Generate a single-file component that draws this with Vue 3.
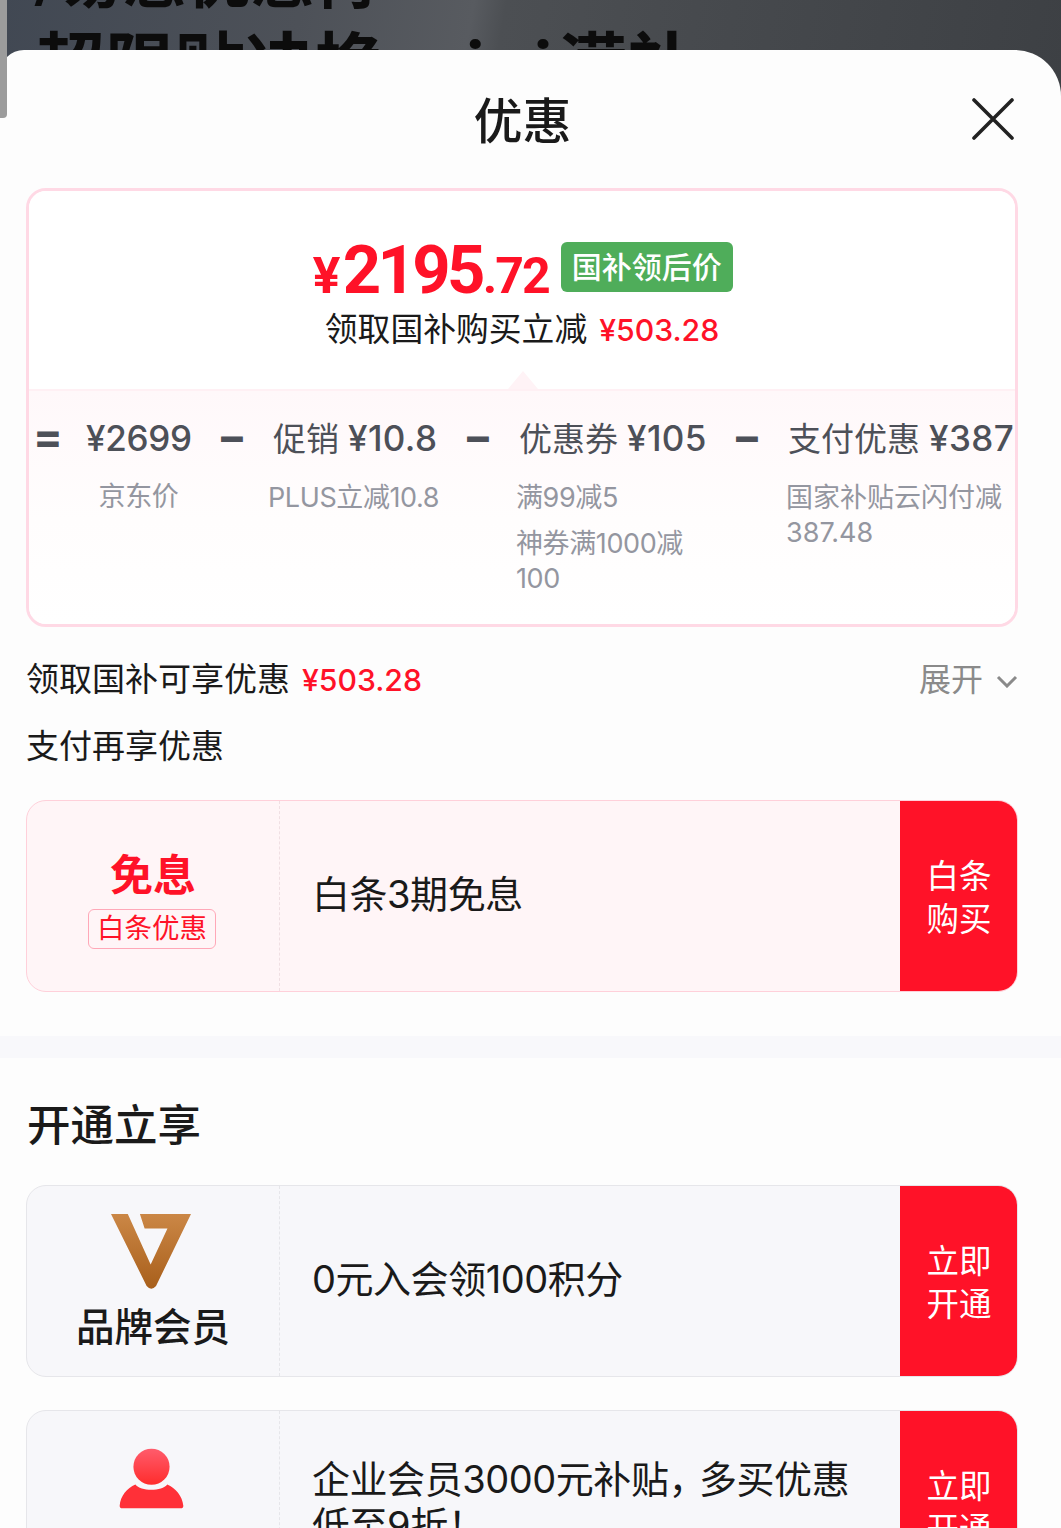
<script setup>
const parts = [
  { op: '=', label: '', amount: '¥2699', center: true, desc: ['京东价'] },
  { op: '−', label: '促销', amount: '¥10.8', desc: ['PLUS立减10.8'] },
  { op: '−', label: '优惠券', amount: '¥105', desc: ['满99减5', '神券满1000减100'] },
  { op: '−', label: '支付优惠', amount: '¥387', desc: ['国家补贴云闪付减387.48'] }
]
</script>

<template>
  <div class="page">
    <div class="hero">
      <div class="hero-line small">/易惠优惠再</div>
      <div class="hero-line">超限贴决换 <span class="latin">mini</span>满补</div>
    </div>
    <div class="scroll-thumb"></div>

    <div class="sheet">
      <div class="title-bar">
        <div class="title">优惠</div>
        <svg class="close" width="42" height="42" viewBox="0 0 42 42">
          <path d="M2 2 L40 40 M40 2 L2 40" stroke="#222" stroke-width="3.6" stroke-linecap="round" fill="none" />
        </svg>
      </div>

      <div class="summary">
        <div class="summary-top">
          <div class="price-row">
            <div class="price">
              <span class="yen">¥</span><span class="int">2195</span><span class="dec">.72</span>
            </div>
            <div class="badge">国补领后价</div>
          </div>
          <div class="sub">领取国补购买立减<span class="red">¥503.28</span></div>
        </div>
        <div class="summary-bottom">
          <div class="arrow"></div>
          <div class="breakdown">
            <template v-for="(p, i) in parts" :key="i">
              <div class="op">{{ p.op }}</div>
              <div class="part" :class="{ center: p.center }">
                <div class="head">
                  <span v-if="p.label" class="label">{{ p.label }}</span>
                  <span class="amount">{{ p.amount }}</span>
                </div>
                <div v-for="d in p.desc" :key="d" class="desc">{{ d }}</div>
              </div>
            </template>
          </div>
        </div>
      </div>

      <div class="line first">
        <div>领取国补可享优惠<span class="red">¥503.28</span></div>
        <div class="expand">
          展开
          <svg width="22" height="13" viewBox="0 0 22 13">
            <path d="M2 2 L11 11 L20 2" stroke="#8a8a8a" stroke-width="3" fill="none" />
          </svg>
        </div>
      </div>
      <div class="line second">支付再享优惠</div>

      <div class="offer pink">
        <div class="offer-left">
          <div class="free">免息</div>
          <div class="tag">白条优惠</div>
        </div>
        <div class="offer-main">白条3期免息</div>
        <div class="offer-btn">白条<br />购买</div>
      </div>

      <div class="band"></div>

      <div class="open-title">开通立享</div>

      <div class="offer gray">
        <div class="offer-left">
          <svg class="logo" width="80" height="75" viewBox="272 102 238 223">
            <defs>
              <linearGradient id="gold" x1="0" y1="0" x2="0" y2="1">
                <stop offset="0" stop-color="#cb8746" />
                <stop offset="1" stop-color="#a85f1b" />
              </linearGradient>
            </defs>
            <path d="M272 102 L322 102 L390 252 L440 145 L372 145 L358 102 L510 102 L406 316 Q392 332 378 316 Z" fill="url(#gold)" />
          </svg>
          <div class="member">品牌会员</div>
        </div>
        <div class="offer-main">0元入会领100积分</div>
        <div class="offer-btn">立即<br />开通</div>
      </div>

      <div class="offer gray">
        <div class="offer-left person">
          <svg class="logo" width="65" height="61" viewBox="296 806 194 182">
            <defs>
              <linearGradient id="ruby" x1="0" y1="0" x2="0" y2="1">
                <stop offset="0" stop-color="#ff5c6c" />
                <stop offset="1" stop-color="#ff2c2c" />
              </linearGradient>
            </defs>
            <circle cx="393" cy="862" r="54" fill="url(#ruby)" />
            <path d="M298 978 C300 950 320 925 345 915 C360 936 425 936 440 915 C465 925 485 950 488 978 Q488 986 480 986 L306 986 Q298 986 298 978 Z" fill="#ff3038" />
          </svg>
        </div>
        <div class="offer-main two-line">企业会员3000元补贴<span class="comma">，</span>多买优惠低至9折！</div>
        <div class="offer-btn">立即<br />开通</div>
      </div>
    </div>
  </div>
</template>

<style scoped>
.page {
  position: relative;
  width: 1061px;
  height: 1528px;
  overflow: hidden;
  font-family: Inter, "Noto Sans CJK SC", sans-serif;
  color: #1a1a1a;
  background: #fdfdfd;
}

.hero {
  height: 100px;
  overflow: hidden;
  background: linear-gradient(100deg, #414853 0%, #4d5158 28%, #585b60 44%, #4c4f53 47%, #3d4044 100%);
  padding-left: 35px;
}

.hero-line {
  font-family: Roboto, "Noto Sans CJK SC", sans-serif;
  font-size: 70px;
  font-weight: 700;
  line-height: 86px;
  color: #0c0c0c;
  white-space: nowrap;
  filter: blur(0.6px);
}

.small {
  font-size: 64px;
  margin-top: -62px;
}

.latin {
  letter-spacing: 5px;
  margin-left: -2px;
}

.scroll-thumb {
  position: absolute;
  left: 0;
  top: 0;
  width: 7px;
  height: 118px;
  background: #9c9c9c;
  border-bottom-right-radius: 4px;
  z-index: 2;
}

.sheet {
  background: #fdfdfd;
  border-radius: 24px 46px 0 0;
  margin-top: -50px;
  position: relative;
  height: 1478px;
  padding: 0 43px 0 26px;
}

.title-bar {
  height: 138px;
  display: flex;
  align-items: center;
  justify-content: center;
  position: relative;
}

.title {
  font-size: 49px;
  font-weight: 500;
  margin-top: -4px;
  margin-left: 1px;
}

.close {
  position: absolute;
  right: 4px;
  top: 48px;
}

.summary {
  width: 992px;
  height: 439px;
  box-sizing: border-box;
  border: 3px solid #ffd9e5;
  border-radius: 20px;
  overflow: hidden;
  display: flex;
  flex-direction: column;
}

.summary-top {
  height: 198px;
  background: #fff;
  display: flex;
  flex-direction: column;
  align-items: center;
}

.price-row {
  display: flex;
  align-items: flex-start;
  margin-top: 51px;
  margin-left: 1px;
}

.price {
  color: #ff1228;
  font-weight: 700;
  line-height: 56px;
  white-space: nowrap;
  display: flex;
  align-items: baseline;
  font-family: Roboto, sans-serif;
}

.yen {
  font-family: Inter, sans-serif;
  font-size: 50px;
}

.int {
  font-size: 67px;
  letter-spacing: -3.7px;
  margin-left: 2px;
}

.dec {
  font-size: 50px;
  letter-spacing: -2px;
  margin-left: 1px;
}

.badge {
  margin-left: 12px;
  width: 172px;
  height: 50px;
  line-height: 50px;
  background: #4fad5a;
  border-radius: 6px;
  color: #fff;
  font-size: 30px;
  text-align: center;
  font-weight: 500;
}

.sub {
  margin-top: 5px;
  font-size: 32.8px;
  line-height: 40px;
}

.red {
  color: #ff1228;
  margin-left: 12px;
  font-weight: 500;
  font-size: 30.2px;
}

.summary-bottom {
  flex: 1;
  position: relative;
  border-top: 2px solid #fff0f4;
  background: linear-gradient(180deg, #fff8fa 0%, #fffdfd 55%, #fff 100%);
  padding: 24px 0 0 6px;
}

.arrow {
  position: absolute;
  left: 479px;
  top: -20px;
  width: 0;
  height: 0;
  border-left: 15px solid transparent;
  border-right: 15px solid transparent;
  border-bottom: 18px solid #fff3f6;
}

.breakdown {
  display: grid;
  grid-template-columns: 23px 105px 23px 167px 23px 190px 23px 227px;
  column-gap: 28px;
  align-items: start;
}

.op {
  font-size: 44px;
  font-weight: 700;
  line-height: 42px;
  color: #4d5058;
  text-align: center;
  margin-left: -2px;
}

.part {
  min-width: 0;
}

.head {
  font-size: 35px;
  line-height: 46px;
  color: #4d5058;
  white-space: nowrap;
  padding-left: 3px;
  margin-bottom: 18px;
}

.label {
  font-size: 33px;
  margin-right: 9px;
}

.amount {
  font-weight: 500;
  letter-spacing: 0.4px;
}

.center .amount {
  letter-spacing: -0.3px;
}

.center .head {
  padding-left: 0;
}

.center {
  text-align: center;
}

.desc {
  font-size: 27px;
  line-height: 35px;
  letter-spacing: -0.4px;
  color: #9496a0;
  margin-right: -8px;
}

.center .desc {
  margin-right: 0;
}

.part:nth-child(4) .desc {
  margin-left: -2px;
}

.part:last-child .desc {
  padding-left: 1px;
  letter-spacing: 0;
}

.desc + .desc {
  margin-top: 11px;
}

.line {
  font-size: 33px;
  line-height: 42px;
  display: flex;
  justify-content: space-between;
  align-items: center;
}

.first {
  width: 992px;
  margin-top: 31px;
}

.second {
  margin-top: 24px;
}

.expand {
  color: #8a8a8a;
  font-size: 32px;
  display: flex;
  align-items: center;
  gap: 13px;
}

.expand svg {
  margin-top: 4px;
}

.offer {
  width: 992px;
  height: 192px;
  box-sizing: border-box;
  border: 1px solid;
  border-radius: 20px;
  display: flex;
  overflow: hidden;
}

.pink {
  margin-top: 33px;
  background: #fff5f7;
  border-color: #ffd0da;
}

.gray {
  margin-top: 33px;
  background: #f7f7fa;
  border-color: #e6e6ea;
}

.offer-left {
  width: 253px;
  flex: none;
  box-sizing: border-box;
  border-right: 1px dashed #f0dfe3;
  display: flex;
  flex-direction: column;
  align-items: center;
  padding-top: 28px;
}

.gray .offer-left {
  border-right-color: #e6e6ea;
}

.pink .offer-left {
  padding-top: 48px;
}

.offer-left.person {
  padding-top: 37px;
}

.logo {
  margin-right: 4px;
}

.free {
  color: #ff1228;
  font-size: 43px;
  font-weight: 700;
  line-height: 52px;
}

.tag {
  margin-top: 8px;
  margin-right: 2px;
  width: 128px;
  height: 40px;
  box-sizing: border-box;
  border: 1px solid #ffa8b8;
  border-radius: 6px;
  color: #ff1228;
  font-size: 27.5px;
  line-height: 37px;
  text-align: center;
}

.member {
  font-size: 38.5px;
  font-weight: 500;
  line-height: 50px;
  margin-top: 13px;
}

.offer-main {
  flex: 1;
  padding: 0 40px 4px 32px;
  font-size: 38px;
  line-height: 46px;
  align-self: center;
  color: #1a1a1a;
  letter-spacing: -0.45px;
}

.two-line {
  align-self: flex-start;
  padding-top: 45px;
}

.comma {
  margin-right: -7px;
}

.offer-btn {
  width: 118px;
  flex: none;
  margin: -1px -1px -1px 0;
  background: #ff1228;
  color: #fff;
  font-size: 32.5px;
  line-height: 43px;
  display: flex;
  align-items: center;
  justify-content: center;
  text-align: center;
  padding-top: 4px;
  box-sizing: border-box;
}

.band {
  height: 22px;
  background: #f8f8fb;
  margin: 44px -43px 0 -26px;
}

.open-title {
  font-size: 43.5px;
  font-weight: 500;
  line-height: 54px;
  margin-top: 40px;
  padding-left: 1px;
}
</style>
